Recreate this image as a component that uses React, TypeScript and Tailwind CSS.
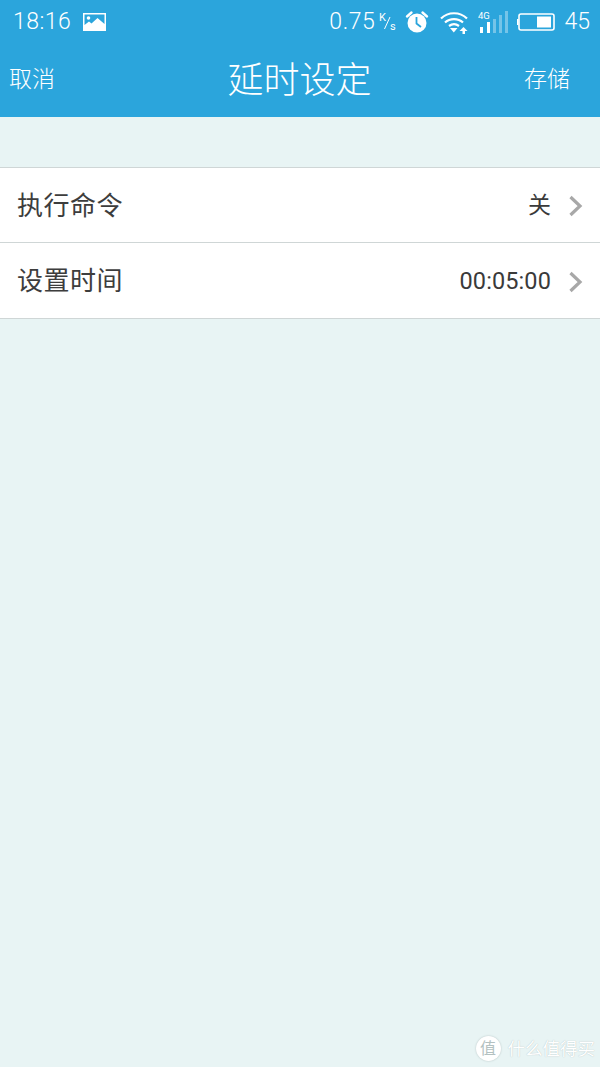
const cjk = "font-['Roboto','Noto_Sans_CJK_SC',sans-serif]";

const ImageIcon = () => (
  <svg width="23" height="18" viewBox="0 0 23 18" className="ml-[12px]">
    <path fillRule="evenodd" fill="#fff" d="M0 0H23V18H0ZM1.5 1.5V12L6 8.5L8.5 10.5L14.5 5L21.5 11V1.5Z" />
    <circle cx="5.5" cy="5" r="1.8" fill="#fff" />
  </svg>
);

const AlarmIcon = () => (
  <svg width="24" height="24" viewBox="0 0 24 24">
    <circle cx="12" cy="13" r="9.5" fill="#fff" />
    <path d="M11.5 7V13.5L16 17" fill="none" stroke="#2ba5dc" strokeWidth="1.8" />
    <path d="M2 6.5L6.5 2.5M22 6.5L17.5 2.5" stroke="#fff" strokeWidth="2.4" strokeLinecap="round" />
  </svg>
);

const WifiIcon = () => (
  <svg width="28" height="24" viewBox="0 0 28 24">
    <g fill="none" stroke="#fff" strokeWidth="2.2">
      <path d="M1 8.5C8 1.5 20 1.5 27 8.5" />
      <path d="M5 12.5C10 8 18 8 23 12.5" />
      <path d="M9 16C12 13.8 16 13.8 19 16" />
    </g>
    <path d="M10 18H17.5L13.8 22.5Z" fill="#fff" />
    <path d="M23.5 17L27.5 21H25V24H22.5V21H19.5Z" fill="#fff" />
  </svg>
);

const SpeedUnit = () => (
  <svg width="18" height="20" viewBox="0 0 18 20" className="ml-[4px] mr-[8px]">
    <text x="0" y="9" fontSize="11" fill="#fff" fontFamily="Roboto, sans-serif">K</text>
    <path d="M5.5 17L11 5" stroke="#fff" strokeWidth="1" />
    <text x="11" y="18" fontSize="11" fill="#fff" fontFamily="Roboto, sans-serif">s</text>
  </svg>
);

const SignalIcon = () => (
  <svg width="30" height="24" viewBox="0 0 30 24">
    <text x="0" y="9" fontSize="9.5" fill="#fff" fontFamily="Roboto, sans-serif">4G</text>
    <rect x="2" y="17" width="3" height="6" fill="#fff" />
    <rect x="9" y="12" width="3" height="11" fill="#fff" />
    <rect x="15" y="9" width="3" height="14" fill="#fff" opacity="0.35" />
    <rect x="21" y="5" width="3" height="18" fill="#fff" opacity="0.35" />
    <rect x="27" y="1" width="3" height="22" fill="#fff" opacity="0.35" />
  </svg>
);

const BatteryIcon = () => (
  <svg width="38" height="18" viewBox="0 0 38 18">
    <rect x="2" y="1" width="35" height="16" rx="2" fill="none" stroke="#fff" strokeWidth="1.6" />
    <rect x="0" y="6" width="1.5" height="6" fill="#fff" />
    <rect x="20" y="3.5" width="14" height="11" fill="#fff" />
  </svg>
);

const Chevron = () => (
  <svg width="17" height="22" viewBox="0 0 17 22" className="ml-[15px]">
    <path d="M4.5 2L14 11L4.5 20" fill="none" stroke="#a8a8a8" strokeWidth="3.2" />
  </svg>
);

const Row = ({ label, value, tall }: { label: string; value: string; tall?: boolean }) => (
  <div className={`flex items-center border-b border-[#cfd6d6] bg-white px-[17px] pt-[2px] ${tall ? "h-[76px]" : "h-[75px]"}`}>
    <span className="text-[26px] tracking-[0.5px] text-[#3d3d3d]">{label}</span>
    <span className={`ml-auto text-[#3a3a3a] ${tall ? "text-[23.5px] tracking-[0.1px]" : "text-[23px]"}`}>{value}</span>
    <Chevron />
  </div>
);

export default function App() {
  return (
    <div className={`relative flex h-[1067px] w-[600px] flex-col overflow-hidden bg-[#e8f4f4] ${cjk}`}>
      <header className="h-[117px] bg-[#2ba5dc] text-white">
        <div className="flex h-[42px] items-center pl-[13px] pr-[10px] pt-[2px]">
          <span className="text-[23px] font-light tracking-[0.5px]">18:16</span>
          <ImageIcon />
          <span className="ml-auto text-[23px] font-light tracking-[0.6px]">0.75</span>
          <SpeedUnit />
          <AlarmIcon />
          <span className="ml-[11px]"><WifiIcon /></span>
          <span className="ml-[10px]"><SignalIcon /></span>
          <span className="ml-[9px]"><BatteryIcon /></span>
          <span className="ml-[9px] text-[23px] font-light">45</span>
        </div>
        <div className="grid h-[75px] grid-cols-3 items-center pl-[9px] pr-[30px] pt-[2px]">
          <span className="text-[23px] font-light">取消</span>
          <span className="translate-x-[10px] whitespace-nowrap text-center text-[36px] font-light">延时设定</span>
          <span className="text-right text-[23px] font-light">存储</span>
        </div>
      </header>
      <div className="mt-[50px] border-t border-[#cfd6d6]">
        <Row label="执行命令" value="关" />
        <Row label="设置时间" value="00:05:00" tall />
      </div>
      <div className="absolute bottom-[5px] right-[5px] flex items-center text-white">
        <span className="flex h-[25px] w-[25px] items-center justify-center rounded-full bg-white text-[16px] text-[#b3c1c1] shadow-[0_0_2px_#b3c1c1]">值</span>
        <span className="ml-[7px] text-[17.5px] [text-shadow:0_0_1px_#a9b8b8]">什么值得买</span>
      </div>
    </div>
  );
}
